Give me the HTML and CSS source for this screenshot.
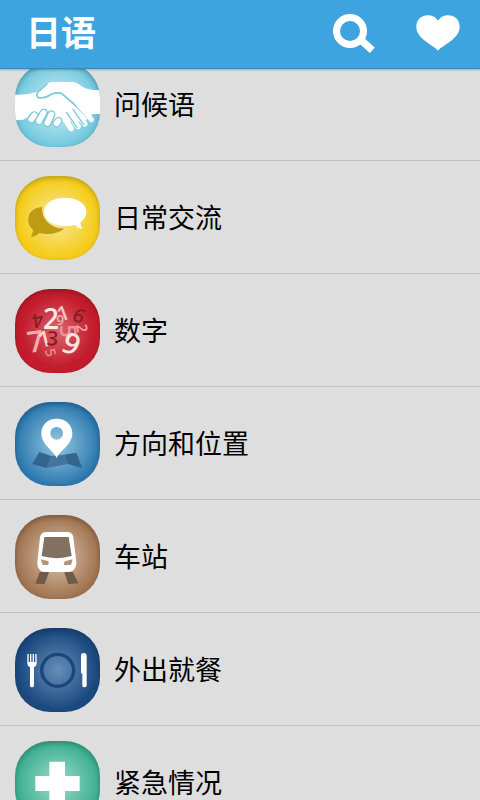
FILE: index.html
```html
<!DOCTYPE html>
<html lang="zh-CN">
<head>
    <meta charset="UTF-8">
    <meta name="viewport" content="width=device-width, initial-scale=1.0">
    <title>日语</title>
    <link rel="stylesheet" href="styles.css">
</head>
<body>
    <header class="topbar">
        <h1 class="title">日语</h1>
        <button type="button" class="action" aria-label="搜索">
            <svg width="42" height="39" viewBox="99 41 126 117">
                <circle cx="150" cy="92" r="40.5" fill="none" stroke="#fff" stroke-width="21"/>
                <path d="M180 117 L217 150" stroke="#fff" stroke-width="22"/>
            </svg>
        </button>
        <button type="button" class="action" aria-label="收藏">
            <svg width="44" height="36" viewBox="348 46 132 108">
                <path fill="#fff" d="M414 153 C402 137 349 118 349 82 C349 60 364 47 384 47 C398 47 409 54 414 64 C419 54 430 47 444 47 C464 47 479 60 479 82 C479 118 426 137 414 153Z"/>
            </svg>
        </button>
    </header>

    <main class="content">
        <ul class="list">
            <li>
                <a href="#" class="row">
                    <svg class="icon greetings" viewBox="0 -45 255 252">
                        <g fill="none" stroke="#fff" stroke-width="17" stroke-linecap="round">
                            <path d="M135 100 L168 151 M155 95 L189 145 M172 88 L209 137"/>
                        </g>
                        <path fill="#fff" d="M-2 50 Q36 52 66 42 L96 17 Q104 11 116 12 L175 12 Q188 14 200 25 Q216 37 257 37 V108 H234 Q224 112 220 120 L208 130 L150 130 L128 132 L60 112 Q40 116 24 125 L-2 127Z"/>
                        <path fill="none" stroke="#7cc9dc" stroke-width="4" stroke-linecap="round" d="M154 103 L186 148 M174 94 L206 140"/>
                        <g fill="none" stroke-linecap="round">
                            <path stroke="#7cc9dc" stroke-width="25" d="M58 112 L49 124 M86 104 L72 129 M109 109 L97 135 M130 129 L125 136"/>
                            <path stroke="#fff" stroke-width="17" d="M58 112 L49 124 M86 104 L72 129 M109 109 L97 135 M130 129 L125 136"/>
                        </g>
                        <path fill="none" stroke="#7cc9dc" stroke-width="5" stroke-linecap="round" stroke-linejoin="round" d="M96 18 L68 43 Q62 53 70 59 Q88 63 110 48 Q122 43 138 45 Q178 77 218 118"/>
                        <path fill="none" stroke="#fff" stroke-width="15" stroke-linecap="round" d="M190 80 L221 114 L229 125"/>
                    </svg>
                    <span class="label">问候语</span>
                </a>
            </li>
            <li>
                <a href="#" class="row">
                    <svg class="icon conversation" viewBox="45 33 255 252">
                        <path fill="#bd9b12" d="M126 126 C98 128 85 145 85 164 C85 179 91 187 99 193 Q99 206 93 216 Q109 213 119 204 C144 211 170 207 193 191 C152 190 124 164 126 126Z"/>
                        <path fill="#fff" d="M195 98 C232 98 259 115 259 140 C259 154 252 164 241 172 Q241 182 247 192 Q232 189 224 180 C182 190 132 175 132 140 C132 115 159 98 195 98Z"/>
                    </svg>
                    <span class="label">日常交流</span>
                </a>
            </li>
            <li>
                <a href="#" class="row">
                    <svg class="icon numbers" viewBox="30 27 255 252">
                        <g class="digits">
                            <text font-size="58" fill="#8a1c25" transform="translate(112 99) rotate(172)">4</text>
                            <text font-size="84" fill="#fde9e6" transform="translate(114 148)">2</text>
                            <text font-size="62" fill="#f7c6c4" transform="translate(165 127) rotate(-20)">1</text>
                            <text font-size="42" fill="#efaaa9" transform="translate(178 104) rotate(180)">6</text>
                            <text font-size="58" fill="#8a1c25" transform="translate(199 120) rotate(22)">6</text>
                            <text font-size="68" fill="#e9989a" transform="translate(164 136) rotate(85)">5</text>
                            <text font-size="44" fill="#f0aaaa" transform="translate(214 134) rotate(82)">2</text>
                            <text font-size="88" fill="#efaead" transform="translate(71 219) rotate(-8)">7</text>
                            <text font-size="66" fill="#fbd9d6" transform="translate(106 204) rotate(-14)">1</text>
                            <text font-size="60" fill="#8a1c25" transform="translate(124 195) rotate(5)">3</text>
                            <text font-size="42" fill="#e58a8d" transform="translate(119 210) rotate(75)">5</text>
                            <text font-size="88" fill="#fde3df" transform="translate(164 211) rotate(22)">9</text>
                        </g>
                    </svg>
                    <span class="label">数字</span>
                </a>
            </li>
            <li>
                <a href="#" class="row">
                    <svg class="icon directions" viewBox="30 30 255 252">
                        <path fill="#35658f" d="M103 180 L139 192 L125 228 L81 216Z M178 188 L214 182 L232 229 L189 216Z"/>
                        <path fill="#44759f" d="M139 192 L178 188 L189 216 L125 228Z"/>
                        <path fill="#fff" fill-rule="evenodd" d="M155 198 C144 174 109 158 109 124 C109 98 129 80 155 80 C181 80 202 98 202 124 C202 158 166 174 155 198Z M155 105 A19 19 0 1 0 155 143 A19 19 0 1 0 155 105Z"/>
                    </svg>
                    <span class="label">方向和位置</span>
                </a>
            </li>
            <li>
                <a href="#" class="row">
                    <svg class="icon station" viewBox="30 30 255 252">
                        <path fill="#715b48" d="M104 201 H132 L119 238 L91 236Z M178 201 H204 L220 235 L190 238Z"/>
                        <path fill="#fff" d="M122 81 H189 Q202 82 205 96 L214 173 Q214 196 193 201 H116 Q97 196 97 173 L105 96 Q108 82 122 81Z"/>
                        <path fill="#827060" d="M118 96 H191 L200 153 Q156 166 110 153Z"/>
                        <path fill="#b59478" d="M107 163 L131 169 L130 180 H113Z M203 163 L179 169 L176 180 H198Z"/>
                    </svg>
                    <span class="label">车站</span>
                </a>
            </li>
            <li>
                <a href="#" class="row">
                    <svg class="icon dining" viewBox="30 30 255 252">
                        <circle cx="158" cy="157" r="48" fill="none" stroke="#1b4678" stroke-width="10"/>
                        <path fill="#fff" d="M67 108 H71 V132 H75 V108 H79 V132 H83 V108 H87 V132 H91 V108 H95 V137 Q94 145 87 148 V203 Q87 208 81 208 Q75 208 75 203 V148 Q68 145 67 137Z"/>
                        <path fill="#fff" d="M228 112 Q228 105 237 105 Q245 106 245 115 V203 Q244 208 238 208 Q232 208 232 203 V169 L228 164Z"/>
                    </svg>
                    <span class="label">外出就餐</span>
                </a>
            </li>
            <li>
                <a href="#" class="row">
                    <svg class="icon emergency" viewBox="45 63 255 252">
                        <path fill="#fff" d="M148 125 H195 V168 H239 V213 H195 V256 H148 V213 H106 V168 H148Z"/>
                    </svg>
                    <span class="label">紧急情况</span>
                </a>
            </li>
        </ul>
    </main>
</body>
</html>
```
FILE: styles.css
```css
* {
    box-sizing: border-box;
}

body {
    display: flex;
    flex-direction: column;
    height: 100vh;
    margin: 0;
    background-color: #dedede;
    color: #000;
    font-family: "Noto Sans CJK SC", sans-serif;
    overflow: hidden;
}

.topbar {
    display: flex;
    flex: none;
    align-items: center;
    gap: 41px;
    height: 69px;
    padding: 0 20px 2px 26px;
    background-color: #3da4e0;
    border-bottom: 1px solid #3787b8;
    box-shadow: 0 1px 2px rgba(0, 0, 0, 0.25);
    z-index: 1;
}

.title {
    flex: 1;
    margin: 0;
    padding-bottom: 4px;
    color: #fff;
    font-size: 35px;
    font-weight: 700;
    line-height: 48px;
}

.action {
    display: flex;
    padding: 0;
    border: none;
    background: none;
    cursor: pointer;
}

.content {
    flex: 1;
    min-height: 0;
    overflow: hidden;
}

/* list is scrolled a little under the top bar */
.list {
    margin: -21px 0 0;
    padding: 0;
    list-style: none;
}

.row {
    display: flex;
    align-items: center;
    gap: 14px;
    padding: 15px 15px 13px;
    border-bottom: 1px solid #c2c2c2;
    color: inherit;
    text-decoration: none;
}

.label {
    padding-bottom: 2px;
    font-size: 27px;
    line-height: 36px;
}

.icon {
    flex: none;
    width: 85px;
    height: 84px;
    border-radius: 35px;
    box-shadow: inset 0 2px 5px rgba(0, 0, 0, 0.25);
}

.greetings {
    background: radial-gradient(circle, #c5edf5 10%, #6cc5dc 75%);
}

.conversation {
    background: radial-gradient(circle, #f8e48c 10%, #f5cd1b 65%);
}

.numbers {
    background: radial-gradient(circle, #d9666d 0%, #c31c2c 60%);
}

.directions {
    background: radial-gradient(circle, #8fc1de 5%, #2d79b0 70%);
}

.station {
    background: radial-gradient(circle, #d3b79f 10%, #a07450 70%);
}

.dining {
    background: radial-gradient(circle, #668eb8 0%, #1c4a80 65%);
}

.emergency {
    background: radial-gradient(circle, #8fd6c0 10%, #3cae90 70%);
}

.digits {
    font-family: "Open Sans", sans-serif;
    font-weight: 600;
}
```
